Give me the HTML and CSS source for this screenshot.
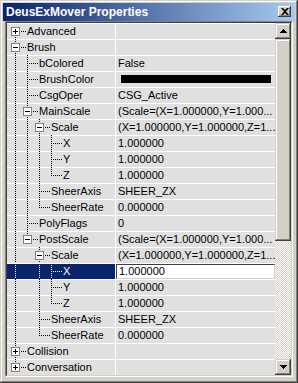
FILE: index.html
```html
<!DOCTYPE html>
<html>

<head>
    <meta charset="UTF-8" />
    <title>DeusExMover Properties</title>
    <link rel="stylesheet" href="styles.css">
</head>

<body>
    <div class="window">
        <div class="titlebar">
            <span class="title">DeusExMover Properties</span>
            <span class="close-btn">
                <svg width="8" height="7" viewBox="0 0 8 7"><path d="M0 0h2l2 2 2-2h2L5 3.5 8 7H6L4 5 2 7H0l3-3.5z" fill="#000"/></svg>
            </span>
        </div>
        <div class="frame">
            <div class="frame-inner">
                <div class="rows">
                    <div class="row"><div class="name"><span class="g f"><i class="box plus"></i></span><span class="label">Advanced</span></div><div class="val"></div></div>
                    <div class="row"><div class="name"><span class="g t"><i class="box"></i></span><span class="label">Brush</span></div><div class="val"></div></div>
                    <div class="row"><div class="name"><span class="g v"></span><span class="g t"></span><span class="label">bColored</span></div><div class="val">False</div></div>
                    <div class="row"><div class="name"><span class="g v"></span><span class="g t"></span><span class="label">BrushColor</span></div><div class="val"><span class="swatch"></span></div></div>
                    <div class="row"><div class="name"><span class="g v"></span><span class="g t"></span><span class="label">CsgOper</span></div><div class="val">CSG_Active</div></div>
                    <div class="row"><div class="name"><span class="g v"></span><span class="g t"><i class="box"></i></span><span class="label">MainScale</span></div><div class="val">(Scale=(X=1.000000,Y=1.000...</div></div>
                    <div class="row"><div class="name"><span class="g v"></span><span class="g v"></span><span class="g t"><i class="box"></i></span><span class="label">Scale</span></div><div class="val">(X=1.000000,Y=1.000000,Z=1...</div></div>
                    <div class="row"><div class="name"><span class="g v"></span><span class="g v"></span><span class="g v"></span><span class="g t"></span><span class="label">X</span></div><div class="val">1.000000</div></div>
                    <div class="row"><div class="name"><span class="g v"></span><span class="g v"></span><span class="g v"></span><span class="g t"></span><span class="label">Y</span></div><div class="val">1.000000</div></div>
                    <div class="row"><div class="name"><span class="g v"></span><span class="g v"></span><span class="g v"></span><span class="g l"></span><span class="label">Z</span></div><div class="val">1.000000</div></div>
                    <div class="row"><div class="name"><span class="g v"></span><span class="g v"></span><span class="g t"></span><span class="label">SheerAxis</span></div><div class="val">SHEER_ZX</div></div>
                    <div class="row"><div class="name"><span class="g v"></span><span class="g v"></span><span class="g l"></span><span class="label">SheerRate</span></div><div class="val">0.000000</div></div>
                    <div class="row"><div class="name"><span class="g v"></span><span class="g t"></span><span class="label">PolyFlags</span></div><div class="val">0</div></div>
                    <div class="row"><div class="name"><span class="g v"></span><span class="g l"><i class="box"></i></span><span class="label">PostScale</span></div><div class="val">(Scale=(X=1.000000,Y=1.000...</div></div>
                    <div class="row"><div class="name"><span class="g v"></span><span class="g"></span><span class="g t"><i class="box"></i></span><span class="label">Scale</span></div><div class="val">(X=1.000000,Y=1.000000,Z=1...</div></div>
                    <div class="row selected"><div class="name"><span class="g v"></span><span class="g"></span><span class="g v"></span><span class="g t"></span><span class="label">X</span></div><div class="val"><span class="edit">1.000000</span></div></div>
                    <div class="row"><div class="name"><span class="g v"></span><span class="g"></span><span class="g v"></span><span class="g t"></span><span class="label">Y</span></div><div class="val">1.000000</div></div>
                    <div class="row"><div class="name"><span class="g v"></span><span class="g"></span><span class="g v"></span><span class="g l"></span><span class="label">Z</span></div><div class="val">1.000000</div></div>
                    <div class="row"><div class="name"><span class="g v"></span><span class="g"></span><span class="g t"></span><span class="label">SheerAxis</span></div><div class="val">SHEER_ZX</div></div>
                    <div class="row"><div class="name"><span class="g v"></span><span class="g"></span><span class="g l"></span><span class="label">SheerRate</span></div><div class="val">0.000000</div></div>
                    <div class="row"><div class="name"><span class="g t"><i class="box plus"></i></span><span class="label">Collision</span></div><div class="val"></div></div>
                    <div class="row"><div class="name"><span class="g l"><i class="box plus"></i></span><span class="label">Conversation</span></div><div class="val"></div></div>
                </div>
                <div class="scrollbar">
                    <div class="sb-btn"><svg width="7" height="4" viewBox="0 0 7 4"><path d="M3 0h1v1h1v1h1v1h1v1H0V3h1V2h1V1h1z" fill="#000"/></svg></div>
                    <div class="sb-thumb"></div>
                    <div class="sb-track"></div>
                    <div class="sb-btn"><svg width="7" height="4" viewBox="0 0 7 4"><path d="M0 0h7v1H6v1H5v1H4v1H3V3H2V2H1V1H0z" fill="#000"/></svg></div>
                </div>
            </div>
        </div>
    </div>
</body>

</html>
```

FILE: styles.css
```css
* {
    box-sizing: border-box;
}

body {
    margin: 0;
    font-family: "Liberation Sans", Arial, sans-serif;
    font-size: 11px;
    background: #d4d0c8;
}

.window {
    width: 298px;
    height: 383px;
    padding: 3px 3px 6px 3px;
    background: #d4d0c8;
    box-shadow: inset -1px -1px #404040, inset 1px 1px #d4d0c8, inset -2px -2px #808080, inset 2px 2px #fff;
}

.titlebar {
    height: 18px;
    display: flex;
    align-items: flex-start;
    background: linear-gradient(to right, #0a246a, #a6caf0);
}

.title {
    color: #fff;
    font-size: 12px;
    font-weight: bold;
    line-height: 18px;
    padding-left: 3px;
}

.close-btn {
    margin: 3px 4px 0 auto;
    width: 13px;
    height: 11px;
    background: #d4d0c8;
    display: flex;
    align-items: center;
    justify-content: center;
    box-shadow: inset -1px -1px #404040, inset 1px 1px #fff, inset -2px -2px #808080;
}

.frame {
    margin: 0 2px;
    border: 1px solid;
    border-color: #808080 #fff #fff #808080;
}

.frame-inner {
    display: flex;
    border: 1px solid;
    border-color: #404040 #d4d0c8 #d4d0c8 #404040;
}

.rows {
    width: 268px;
    height: 352px;
    background: #e0e0e0;
}

.row {
    display: flex;
    height: 16px;
    border-top: 1px solid #fff;
    line-height: 15px;
    color: #000;
}

.name {
    width: 108px;
    display: flex;
    padding-left: 3px;
    white-space: nowrap;
}

.label {
    padding-left: 5px;
}

.val {
    width: 160px;
    padding-left: 2px;
    border-left: 1px solid #fff;
    white-space: nowrap;
    overflow: hidden;
}

/* tree guide lines */
.g {
    position: relative;
    width: 12px;
    height: 15px;
    flex: none;
}

.g.v::before,
.g.t::before,
.g.l::before,
.g.f::before {
    content: "";
    position: absolute;
    left: 5px;
    top: -1px;
    width: 1px;
    height: 16px;
    background: repeating-linear-gradient(to bottom, #000 0 1px, transparent 1px 2px);
}

.g.l::before {
    height: 9px;
}

.g.f::before {
    top: 7px;
    height: 8px;
}

.g.t::after,
.g.l::after,
.g.f::after {
    content: "";
    position: absolute;
    left: 7px;
    top: 7px;
    width: 9px;
    height: 1px;
    background: repeating-linear-gradient(to right, #000 0 1px, transparent 1px 2px);
}

.box {
    position: absolute;
    left: 1px;
    top: 3px;
    width: 9px;
    height: 9px;
    border: 1px solid #808080;
    background: #fff;
    z-index: 1;
}

.box::before {
    content: "";
    position: absolute;
    left: 1px;
    top: 3px;
    width: 5px;
    height: 1px;
    background: #000;
}

.box.plus::after {
    content: "";
    position: absolute;
    left: 3px;
    top: 1px;
    width: 1px;
    height: 5px;
    background: #000;
}

.selected .name {
    background: #0a246a;
    color: #fff;
}

.selected .g::before {
    background: repeating-linear-gradient(to bottom, #fff 0 1px, transparent 1px 2px);
}

.selected .g::after {
    background: repeating-linear-gradient(to right, #fff 0 1px, transparent 1px 2px);
}

.selected .val {
    padding-left: 0;
}

.edit {
    display: block;
    height: 15px;
    padding-left: 2px;
    background: #fff;
    border: 1px solid;
    border-color: #404040 #d4d0c8 #d4d0c8 #404040;
    line-height: 13px;
}

.swatch {
    display: inline-block;
    width: 150px;
    height: 8px;
    margin: 3px 0 0 3px;
    background: #000;
    vertical-align: top;
}

/* scrollbar */
.scrollbar {
    width: 16px;
    display: flex;
    flex-direction: column;
}

.sb-btn,
.sb-thumb {
    background: #d4d0c8;
    box-shadow: inset -1px -1px #404040, inset 1px 1px #d4d0c8, inset -2px -2px #808080, inset 2px 2px #fff;
}

.sb-btn {
    height: 16px;
    display: flex;
    align-items: center;
    justify-content: center;
}

.sb-thumb {
    height: 202px;
}

.sb-track {
    height: 118px;
    background: repeating-conic-gradient(#d4d0c8 0 25%, #fff 0 50%) 0 0 / 2px 2px;
}
```
